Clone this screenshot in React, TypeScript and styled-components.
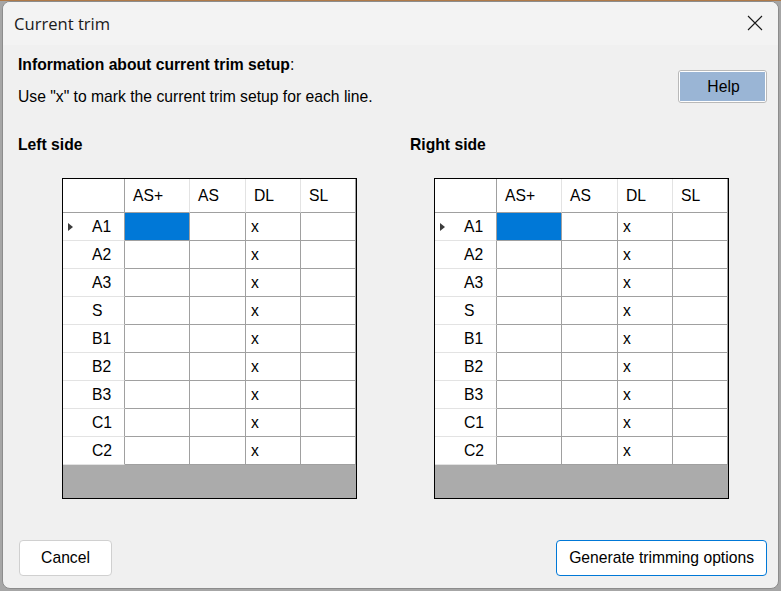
import React from "react";
import styled, { createGlobalStyle } from "styled-components";

const GlobalStyle = createGlobalStyle`
  html, body { margin: 0; padding: 0; }
  body {
    width: 781px;
    height: 591px;
    overflow: hidden;
    background: linear-gradient(180deg, #b07a48 0px, #b07a48 1px, #a6a6a6 1px);
    font-family: "Liberation Sans", Arial, sans-serif;
  }
  #root { padding: 1px 0 0 2px; }
`;

const Window = styled.div`
  box-sizing: border-box;
  width: 777px;
  height: 588px;
  background: #f0f0f0;
  border: 1px solid #8c8c8c;
  border-radius: 8px;
  overflow: hidden;
  display: flex;
  flex-direction: column;
`;

const TitleBar = styled.div`
  height: 43px;
  flex: none;
  background: #f3f3f3;
  display: flex;
  align-items: center;
  justify-content: space-between;
  padding: 0 15px 0 11px;
`;

const Title = styled.span`
  font-family: "Open Sans", "Noto Sans", sans-serif;
  font-size: 16.6px;
  color: #1a1a1a;
  margin-top: -1px;
`;

const Close = styled.div`
  width: 16px;
  height: 16px;
  display: flex;
  margin-top: -1px;
`;

const Body = styled.div`
  flex: 1;
  display: flex;
  flex-direction: column;
  padding: 10px 11px 12px 15px;
  font-size: 15.7px;
  color: #000;
`;

const InfoRow = styled.div`
  display: flex;
  justify-content: space-between;
  align-items: flex-start;
`;

const InfoText = styled.div`
  display: flex;
  flex-direction: column;
  gap: 12px;
`;

const Line = styled.div<{ $bold?: boolean }>`
  line-height: 20px;
  font-weight: ${(p) => (p.$bold ? 700 : 400)};
`;

const Colon = styled.span`
  font-weight: 400;
`;

const HelpButton = styled.button`
  box-sizing: border-box;
  width: 89px;
  height: 33px;
  margin-top: 15px;
  padding: 0;
  border: 1px solid #b9b9b9;
  border-radius: 3px;
  background: #ffffff;
  font: inherit;
  color: #000;
  display: flex;
  align-items: stretch;
`;

const HelpFill = styled.span`
  flex: 1;
  margin: 1px;
  background: #9ab5d5;
  display: flex;
  align-items: center;
  justify-content: center;
  padding-left: 2px;
`;

const Sides = styled.div`
  display: grid;
  grid-template-columns: 392px 1fr;
  margin-top: 28px;
`;

const Side = styled.div`
  display: flex;
  flex-direction: column;
`;

const SideLabel = styled.div`
  font-weight: 700;
  line-height: 20px;
`;

const Grid = styled.div<{ $offset: number }>`
  box-sizing: border-box;
  width: 295px;
  height: 321px;
  margin-top: 23px;
  margin-left: ${(p) => p.$offset}px;
  border: 1px solid #000;
  background: #ababab;
  display: flex;
  flex-direction: column;
`;

const GridRow = styled.div<{ $header?: boolean }>`
  display: flex;
  height: ${(p) => (p.$header ? 34 : 28)}px;
`;

const CellBase = styled.div<{ $w: number }>`
  box-sizing: border-box;
  width: ${(p) => p.$w}px;
  flex: none;
  height: 100%;
  background: #fff;
  display: flex;
  align-items: center;
`;

const CornerCell = styled(CellBase)`
  border-right: 1px solid #a0a0a0;
  border-bottom: 1px solid #a0a0a0;
`;

const HeaderCell = styled(CellBase)<{ $last?: boolean }>`
  border-right: 1px solid ${(p) => (p.$last ? "#a0a0a0" : "#e3e3e3")};
  border-bottom: 1px solid #a0a0a0;
  padding: 1px 0 0 8px;
`;

const RowHeader = styled(CellBase)`
  border-right: 1px solid #a0a0a0;
  border-bottom: 1px solid #e3e3e3;
  padding: 1px 0 0 5px;
`;

const Marker = styled.span`
  width: 24px;
  flex: none;
  display: flex;
  align-items: center;
`;

const Triangle = styled.span`
  width: 0;
  height: 0;
  border-top: 4px solid transparent;
  border-bottom: 4px solid transparent;
  border-left: 5px solid #3c3c3c;
`;

const DataCell = styled(CellBase)<{ $selected?: boolean }>`
  border-right: 1px solid #a0a0a0;
  border-bottom: 1px solid #a0a0a0;
  background: ${(p) => (p.$selected ? "#0078d7" : "#fff")};
  padding: 1px 0 0 5px;
`;

const Footer = styled.div`
  margin-top: auto;
  display: flex;
  justify-content: space-between;
  padding: 0 0 0 1px;
`;

const Button = styled.button<{ $primary?: boolean }>`
  box-sizing: border-box;
  height: 36px;
  padding: 0 12px;
  min-width: 93px;
  background: #fff;
  border: 1px solid ${(p) => (p.$primary ? "#0078d7" : "#d0d0d0")};
  border-radius: 4px;
  font: inherit;
  color: #000;
`;

const columns = [
  { key: "AS+", w: 65 },
  { key: "AS", w: 56 },
  { key: "DL", w: 55 },
  { key: "SL", w: 55 },
];

const rows = ["A1", "A2", "A3", "S", "B1", "B2", "B3", "C1", "C2"];

const TrimGrid: React.FC<{ offset: number }> = ({ offset }) => (
  <Grid $offset={offset}>
    <GridRow $header>
      <CornerCell $w={62} />
      {columns.map((c, i) => (
        <HeaderCell key={c.key} $w={c.w} $last={i === columns.length - 1}>
          {c.key}
        </HeaderCell>
      ))}
    </GridRow>
    {rows.map((r, ri) => (
      <GridRow key={r}>
        <RowHeader $w={62}>
          <Marker>{ri === 0 && <Triangle />}</Marker>
          {r}
        </RowHeader>
        {columns.map((c, ci) => (
          <DataCell key={c.key} $w={c.w} $selected={ri === 0 && ci === 0}>
            {c.key === "DL" ? "x" : ""}
          </DataCell>
        ))}
      </GridRow>
    ))}
  </Grid>
);

export default function App() {
  return (
    <>
      <GlobalStyle />
      <Window>
        <TitleBar>
          <Title>Current trim</Title>
          <Close>
            <svg width="16" height="16" viewBox="0 0 16 16">
              <path d="M1 1 L15 15 M15 1 L1 15" stroke="#1a1a1a" strokeWidth="1.1" fill="none" />
            </svg>
          </Close>
        </TitleBar>
        <Body>
          <InfoRow>
            <InfoText>
              <Line $bold>
                Information about current trim setup<Colon>:</Colon>
              </Line>
              <Line>Use "x" to mark the current trim setup for each line.</Line>
            </InfoText>
            <HelpButton>
              <HelpFill>Help</HelpFill>
            </HelpButton>
          </InfoRow>
          <Sides>
            <Side>
              <SideLabel>Left side</SideLabel>
              <TrimGrid offset={44} />
            </Side>
            <Side>
              <SideLabel>Right side</SideLabel>
              <TrimGrid offset={24} />
            </Side>
          </Sides>
          <Footer>
            <Button>Cancel</Button>
            <Button $primary>Generate trimming options</Button>
          </Footer>
        </Body>
      </Window>
    </>
  );
}
